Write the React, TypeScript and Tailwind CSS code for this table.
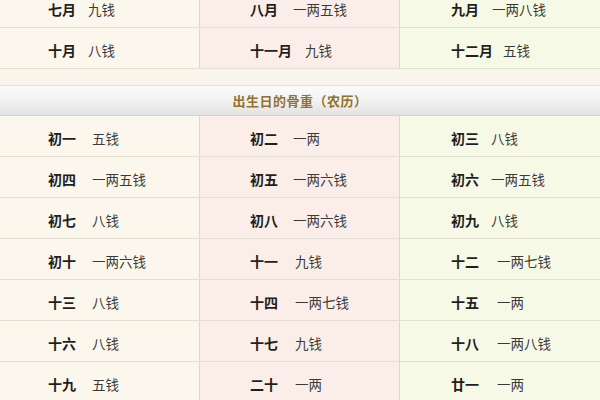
const FONT = { fontFamily: '"Noto Sans CJK SC", "Noto Sans", sans-serif' };

type Cell = { label: string; value: string; gap: string };

const MONTHS: Cell[][] = [
  [
    { label: '七月', value: '九钱', gap: 'gap-3' },
    { label: '八月', value: '一两五钱', gap: 'gap-[15px]' },
    { label: '九月', value: '一两八钱', gap: 'gap-[13px]' },
  ],
  [
    { label: '十月', value: '八钱', gap: 'gap-3' },
    { label: '十一月', value: '九钱', gap: 'gap-[13px]' },
    { label: '十二月', value: '五钱', gap: 'gap-[10px]' },
  ],
];

const DAYS: Cell[][] = [
  [
    { label: '初一', value: '五钱', gap: 'gap-4' },
    { label: '初二', value: '一两', gap: 'gap-[15px]' },
    { label: '初三', value: '八钱', gap: 'gap-3' },
  ],
  [
    { label: '初四', value: '一两五钱', gap: 'gap-4' },
    { label: '初五', value: '一两六钱', gap: 'gap-[15px]' },
    { label: '初六', value: '一两五钱', gap: 'gap-3' },
  ],
  [
    { label: '初七', value: '八钱', gap: 'gap-4' },
    { label: '初八', value: '一两六钱', gap: 'gap-[15px]' },
    { label: '初九', value: '八钱', gap: 'gap-3' },
  ],
  [
    { label: '初十', value: '一两六钱', gap: 'gap-4' },
    { label: '十一', value: '九钱', gap: 'gap-[17px]' },
    { label: '十二', value: '一两七钱', gap: 'gap-[18px]' },
  ],
  [
    { label: '十三', value: '八钱', gap: 'gap-4' },
    { label: '十四', value: '一两七钱', gap: 'gap-[17px]' },
    { label: '十五', value: '一两', gap: 'gap-[18px]' },
  ],
  [
    { label: '十六', value: '八钱', gap: 'gap-4' },
    { label: '十七', value: '九钱', gap: 'gap-[17px]' },
    { label: '十八', value: '一两八钱', gap: 'gap-[18px]' },
  ],
  [
    { label: '十九', value: '五钱', gap: 'gap-4' },
    { label: '二十', value: '一两', gap: 'gap-[17px]' },
    { label: '廿一', value: '一两', gap: 'gap-[18px]' },
  ],
];

const COLS = [
  'bg-[#fcf7ed] pl-[48px] border-r border-[#dcd8cf]',
  'bg-[#fbeee8] pl-[50px] border-r border-[#dcd8cf]',
  'bg-[#f7f9e7] pl-[51px]',
];

function Row({ cells }: { cells: Cell[] }) {
  return (
    <div className="grid grid-cols-[200px_200px_200px] h-[41px] border-b border-[#e4dfd3]">
      {cells.map((c, i) => (
        <div key={c.label} className={`flex items-center pt-[5px] ${c.gap} ${COLS[i]}`}>
          <span className="text-[14px] font-bold text-[#1f1f1f]">{c.label}</span>
          <span className="text-[13.5px] text-[#3a3a3a]">{c.value}</span>
        </div>
      ))}
    </div>
  );
}

export default function App() {
  return (
    <div className="w-[600px] h-[400px] overflow-hidden bg-[#fbf6ec]" style={FONT}>
      <div className="-mt-[13px] flex flex-col">
        {MONTHS.map((r, i) => (
          <Row key={i} cells={r} />
        ))}

        {/* spacer */}
        <div className="h-[17px] bg-[#faf5ea] border-b border-[#e4dfd3]" />

        {/* section header */}
        <div className="h-[30px] flex items-center justify-center bg-gradient-to-b from-[#fbfbfb] via-[#f2f2f2] to-[#e2e2e2] border-b border-[#d6d3cb]">
          <span className="text-[13px] font-bold text-[#93722f] tracking-[0.5px]">出生日的骨重（农历）</span>
        </div>

        {DAYS.map((r, i) => (
          <Row key={i} cells={r} />
        ))}
      </div>
    </div>
  );
}
